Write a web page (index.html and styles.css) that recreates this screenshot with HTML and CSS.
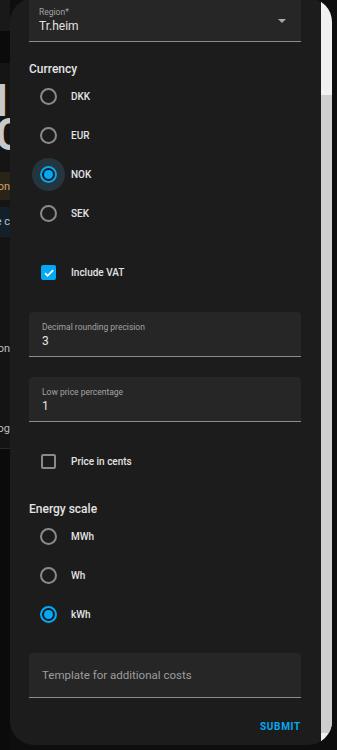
FILE: index.html
```html
<!DOCTYPE html>
<html lang="en">
<head>
    <meta charset="UTF-8">
    <meta name="viewport" content="width=device-width, initial-scale=1.0">
    <title>Energy prices options</title>
    <link rel="stylesheet" href="styles.css">
</head>
<body>
    <!-- page behind the dialog, only a thin strip shows -->
    <div class="page">
        <div class="page-header"></div>
        <div class="page-tabs"></div>
        <div class="page-gap"></div>
        <div class="page-big">I</div>
        <div class="page-big round">C</div>
        <div class="page-gap small"></div>
        <div class="page-note warn"><span>Notification</span></div>
        <div class="page-gap tiny"></div>
        <div class="page-note info"><span>Price c</span></div>
        <div class="page-card">
            <div class="page-line first"><span>Region</span></div>
            <div class="page-line"><span>Log</span></div>
        </div>
        <div class="page-rest"></div>
    </div>

    <div class="dialog">
        <div class="dialog-body">
            <div class="field select">
                <span class="field-label">Region*</span>
                <span class="field-value">Tr.heim</span>
                <span class="caret"></span>
            </div>

            <h3 class="section">Currency</h3>
            <div class="option"><span class="radio"></span><span class="option-text">DKK</span></div>
            <div class="option"><span class="radio"></span><span class="option-text">EUR</span></div>
            <div class="option"><span class="radio checked focus"></span><span class="option-text">NOK</span></div>
            <div class="option"><span class="radio"></span><span class="option-text">SEK</span></div>

            <div class="option spaced">
                <span class="checkbox checked">
                    <svg viewBox="0 0 14 14" width="14" height="14"><path d="M3 7.2l2.6 2.6L11.2 4.2" fill="none" stroke="#fff" stroke-width="1.8"/></svg>
                </span>
                <span class="option-text">Include VAT</span>
            </div>

            <div class="field">
                <span class="field-label">Decimal rounding precision</span>
                <span class="field-value">3</span>
            </div>

            <div class="field">
                <span class="field-label">Low price percentage</span>
                <span class="field-value">1</span>
            </div>

            <div class="option spaced">
                <span class="checkbox"></span>
                <span class="option-text">Price in cents</span>
            </div>

            <h3 class="section spaced">Energy scale</h3>
            <div class="option"><span class="radio"></span><span class="option-text">MWh</span></div>
            <div class="option"><span class="radio"></span><span class="option-text">Wh</span></div>
            <div class="option"><span class="radio checked"></span><span class="option-text">kWh</span></div>

            <div class="field placeholder">
                <span class="field-hint">Template for additional costs</span>
            </div>

            <div class="actions">
                <button class="submit">Submit</button>
            </div>
        </div>
        <div class="scrollbar">
            <div class="scroll-thumb"></div>
        </div>
    </div>
</body>
</html>
```

FILE: styles.css
```css
body {
    margin: 0;
    width: 337px;
    height: 750px;
    overflow: hidden;
    background: #0e0e0e;
    font-family: Roboto, 'Noto Sans', sans-serif;
    position: relative;
}

/* background page */
.page {
    width: 10px;
    display: flex;
    flex-direction: column;
    overflow: hidden;
}

.page-header {
    height: 31px;
    background: #191919;
}

.page-tabs {
    height: 32px;
    background: #0b0b0b;
}

.page-gap {
    height: 21px;
    background: #151515;
}

.page-gap.small {
    height: 20px;
}

.page-gap.tiny {
    height: 7px;
}

.page-big {
    height: 34px;
    display: flex;
    justify-content: flex-end;
    background: #151515;
    color: #c8c8c8;
    font-size: 44px;
    line-height: 34px;
    font-weight: 700;
    padding-right: 2px;
}

.page-big.round {
    padding-right: 0;
    margin-right: -14px;
}

.page-note {
    height: 28px;
    display: flex;
    justify-content: flex-end;
    align-items: center;
    font-size: 11px;
    white-space: nowrap;
}

.page-note.warn {
    background: #2a2317;
    color: #caa46c;
}

.page-note.info {
    height: 29px;
    background: #13202a;
    color: #a9c6e0;
}

.page-card {
    height: 211px;
    background: #141414;
    border-top: 1px solid #202020;
    display: flex;
    flex-direction: column;
}

.page-line {
    display: flex;
    justify-content: flex-end;
    white-space: nowrap;
    color: #bdbdbd;
    font-size: 11px;
    line-height: 16px;
    margin-top: 64px;
}

.page-line.first {
    margin-top: 104px;
}

.page-rest {
    height: 320px;
    background: #0b0b0b;
    border-top: 1px solid #2a2a2a;
}

/* dialog */
.dialog {
    position: absolute;
    left: 10px;
    top: -2px;
    width: 322px;
    height: 747px;
    background: #1c1c1c;
    border-radius: 24px;
    overflow: hidden;
    display: flex;
}

.dialog-body {
    flex: 1;
    padding: 4px 20px 0 19px;
    display: flex;
    flex-direction: column;
}

.scrollbar {
    width: 11px;
    background: #f1f1f1;
    padding: 97px 0 12px;
}

.scroll-thumb {
    height: 100%;
    background: #cecece;
}

.field {
    position: relative;
    background: #262626;
    border-radius: 4px 4px 0 0;
    border-bottom: 1px solid #8c8c8c;
    padding: 10px 13px 0;
    height: 34px;
    display: flex;
    flex-direction: column;
    margin-top: 20px;
}

.field.select {
    margin-top: -5px;
    padding-left: 10px;
}

.field-label {
    font-size: 8.5px;
    line-height: 10px;
    color: #a3a3a3;
}

.field-value {
    margin-top: 1px;
    font-size: 12px;
    line-height: 16px;
    color: #e3e3e3;
}

.caret {
    position: absolute;
    right: 15px;
    top: 22px;
    width: 0;
    height: 0;
    border-left: 4px solid transparent;
    border-right: 4px solid transparent;
    border-top: 4px solid #a8a8a8;
}

.field.placeholder {
    margin-top: 19px;
    padding-top: 0;
    height: 44px;
    justify-content: center;
}

.field-hint {
    font-size: 11.5px;
    color: #9d9d9d;
}

.section {
    margin: 19px 0 0;
    font-size: 12px;
    line-height: 16px;
    font-weight: 500;
    color: #e3e3e3;
}

.section.spaced {
    margin-top: 20px;
}

.option {
    height: 39px;
    display: flex;
    align-items: center;
}

.option.spaced {
    margin-top: 20px;
}

.option-text {
    margin-left: 14px;
    font-size: 10px;
    font-weight: 500;
    color: #e3e3e3;
}

.radio {
    position: relative;
    width: 13px;
    height: 13px;
    margin-left: 11px;
    border: 2px solid #8a8a8a;
    border-radius: 50%;
    flex-shrink: 0;
}

.radio.checked {
    border-color: #03a9f4;
}

.radio.checked::after {
    content: '';
    position: absolute;
    left: 2px;
    top: 2px;
    width: 9px;
    height: 9px;
    border-radius: 50%;
    background: #03a9f4;
}

.radio.focus {
    box-shadow: 0 0 0 8px #25353e;
}

.checkbox {
    width: 11px;
    height: 11px;
    margin-left: 12px;
    margin-right: 1px;
    border: 2px solid #8a8a8a;
    border-radius: 2px;
    flex-shrink: 0;
    display: flex;
    align-items: center;
    justify-content: center;
}

.checkbox.checked {
    background: #03a9f4;
    border-color: #03a9f4;
}

.checkbox svg {
    flex-shrink: 0;
}

.actions {
    display: flex;
    justify-content: flex-end;
    margin-top: 21px;
}

.submit {
    background: none;
    border: none;
    padding: 0;
    font-family: Roboto, sans-serif;
    font-size: 10px;
    line-height: 16px;
    font-weight: 700;
    letter-spacing: 0.7px;
    text-transform: uppercase;
    color: #03a9f4;
}
```
